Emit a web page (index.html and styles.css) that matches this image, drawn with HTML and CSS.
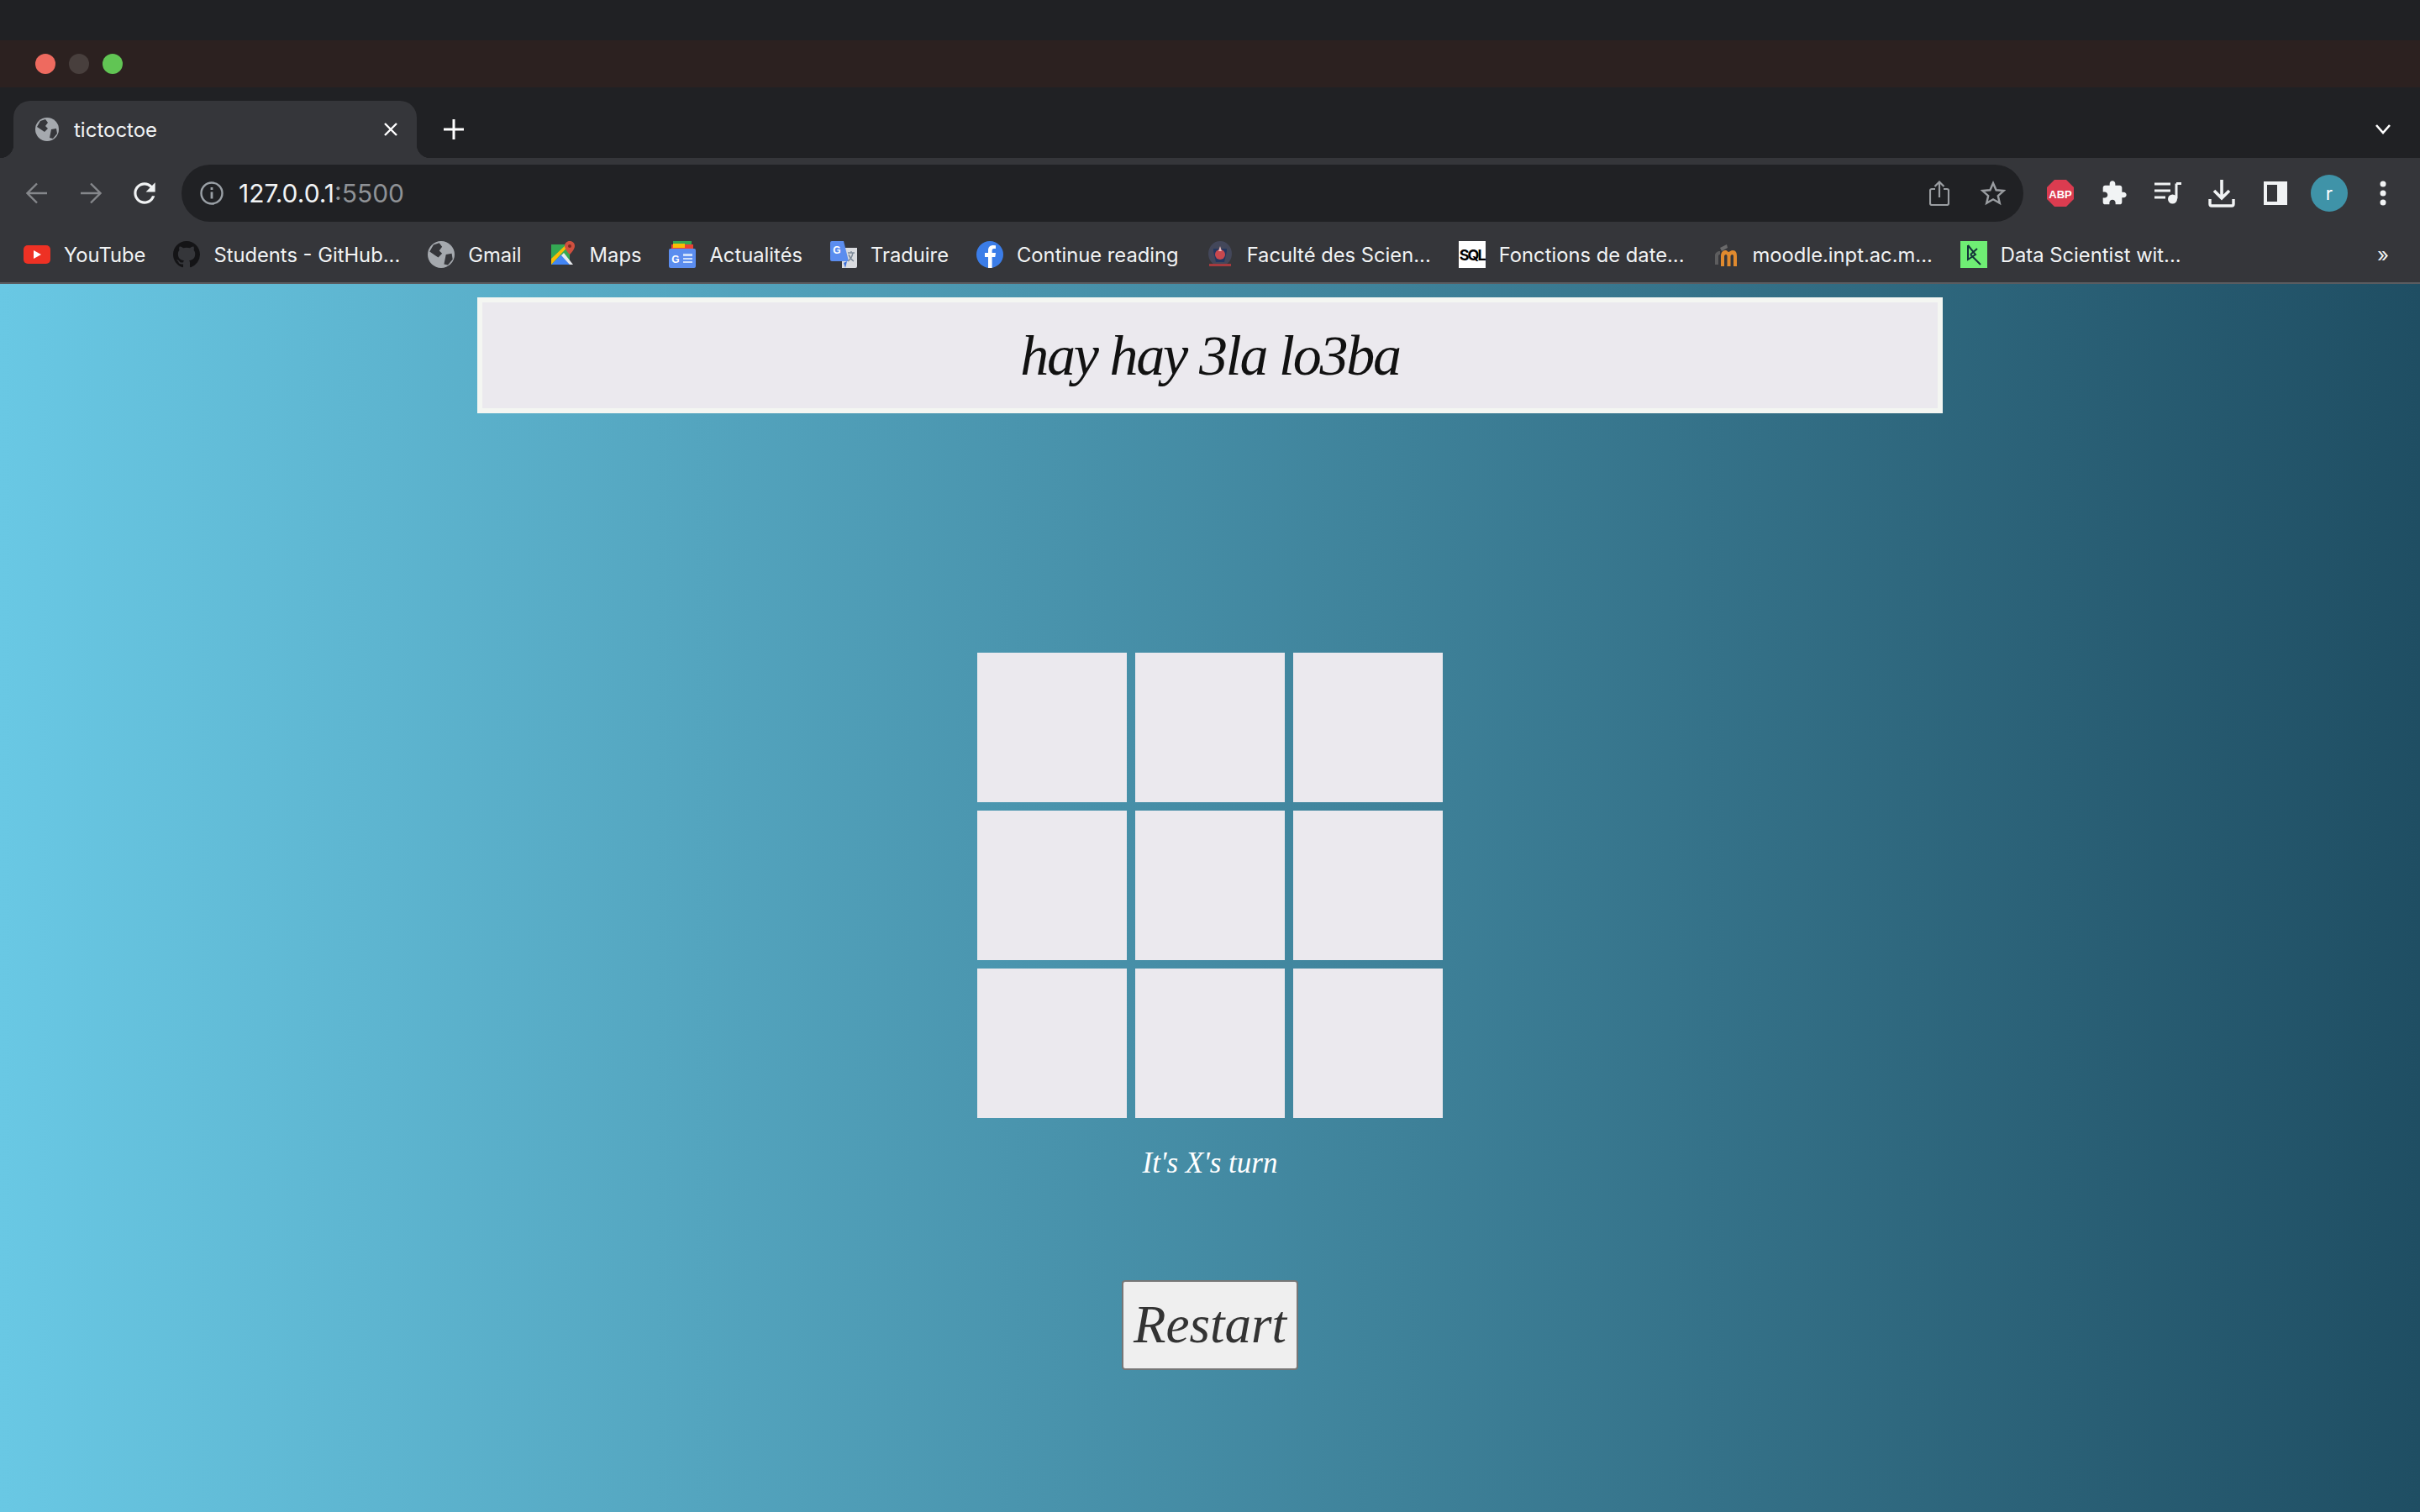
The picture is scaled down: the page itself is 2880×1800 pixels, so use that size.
FILE: index.html
```html
<!DOCTYPE html>
<html lang="fr">
<head>
    <meta charset="utf-8">
    <title>tictoctoe</title>
    <link rel="stylesheet" href="styles.css">
</head>
<body>
    <!-- browser chrome -->
    <div class="top-strip"></div>
    <div class="title-bar">
        <span class="light red"></span>
        <span class="light grey"></span>
        <span class="light green"></span>
    </div>
    <div class="tab-strip">
        <div class="tab">
            <svg class="tab-icon" viewBox="0 0 28 28"><circle cx="14" cy="14" r="14" fill="#a5a9ae"/><path d="M6 4l6-2 3 4-3 4 3 3-4 4-3-2-6-4zM19 14l6-1 1 6-5 6-4-1 1-5z" fill="#35363a"/></svg>
            <span class="tab-title">tictoctoe</span>
            <svg class="tab-close" viewBox="0 0 18 18"><path d="M2 2l14 14M16 2L2 16" stroke="#fff" stroke-width="2.4"/></svg>
        </div>
        <svg class="new-tab" viewBox="0 0 24 24"><path d="M12 0v24M0 12h24" stroke="#fff" stroke-width="3"/></svg>
        <svg class="tab-list" viewBox="0 0 20 14"><path d="M2 2l8 9 8-9" fill="none" stroke="#fff" stroke-width="2.6"/></svg>
    </div>
    <div class="toolbar">
        <span class="tool"><svg width="26" height="26" viewBox="0 0 26 26"><path d="M25 13H2M13 1.500L1.500 13 13 24.500" fill="none" stroke="#85878b" stroke-width="2.400"/></svg></span>
        <span class="tool"><svg width="26" height="26" viewBox="0 0 26 26"><path d="M1 13h23M13 1.500L24.500 13 13 24.500" fill="none" stroke="#85878b" stroke-width="2.400"/></svg></span>
        <span class="tool"><svg width="38" height="38" viewBox="0 0 24 24"><path d="M17.650 6.350C16.200 4.900 14.210 4 12 4c-4.420 0-7.990 3.580-7.990 8s3.570 8 7.990 8c3.730 0 6.840-2.550 7.730-6h-2.080c-.82 2.330-3.040 4-5.650 4-3.310 0-6-2.690-6-6s2.690-6 6-6c1.660 0 3.140.69 4.220 1.780L13 11h7V4l-2.350 2.350z" fill="#f1f3f4"/></svg></span>
        <div class="omnibox">
            <svg class="info" viewBox="0 0 28 28"><circle cx="14" cy="14" r="12.500" fill="none" stroke="#9aa0a6" stroke-width="2.400"/><path d="M14 12.500v8M14 7v3" stroke="#9aa0a6" stroke-width="2.800"/></svg>
            <span class="url">127.0.0.1<span class="port">:5500</span></span>
            <span class="tool"><svg width="24" height="30" viewBox="0 0 24 30"><path d="M7 10H3a2 2 0 0 0-2 2v15a2 2 0 0 0 2 2h18a2 2 0 0 0 2-2V12a2 2 0 0 0-2-2h-4M12 20V2M6.500 7L12 1.500 17.500 7" fill="none" stroke="#9b9ea2" stroke-width="2.200"/></svg></span>
            <span class="tool"><svg width="30" height="30" viewBox="0 0 30 30"><path d="M15 3l3.600 8.300 9 .8-6.800 6 2 8.800-7.800-4.600-7.800 4.600 2-8.800-6.800-6 9-.8z" fill="none" stroke="#9b9ea2" stroke-width="2.400"/></svg></span>
        </div>
        <span class="tool"><svg width="34" height="34" viewBox="0 0 34 34"><path d="M10 1h14l9 9v14l-9 9H10l-9-9V10z" fill="#db3c50"/><text x="17" y="22.500" class="abp">ABP</text></svg></span>
        <span class="tool"><svg width="32" height="32" viewBox="0 0 24 24"><path d="M20.500 11H19V7c0-1.100-.9-2-2-2h-4V3.500C13 2.120 11.880 1 10.500 1S8 2.120 8 3.500V5H4c-1.100 0-1.990.9-1.990 2v3.800H3.500c1.490 0 2.700 1.210 2.700 2.700s-1.210 2.700-2.700 2.700H2V20c0 1.100.9 2 2 2h3.800v-1.500c0-1.490 1.210-2.700 2.700-2.700 1.490 0 2.700 1.210 2.700 2.700V22H17c1.100 0 2-.9 2-2v-4h1.500c1.380 0 2.500-1.120 2.500-2.500S21.880 11 20.500 11z" fill="#f1f3f4"/></svg></span>
        <span class="tool"><svg width="32" height="26" viewBox="0 0 32 26"><path d="M0 2h19M0 10h19M0 18h13" stroke="#f1f3f4" stroke-width="3"/><path d="M26 1.500v18" stroke="#f1f3f4" stroke-width="3"/><path d="M26 1.500h6" stroke="#f1f3f4" stroke-width="3"/><circle cx="21.500" cy="20" r="5.500" fill="#f1f3f4"/></svg></span>
        <span class="tool"><svg width="32" height="34" viewBox="0 0 32 34"><path d="M16 1v21M7 14l9 9 9-9" fill="none" stroke="#f1f3f4" stroke-width="3.600"/><path d="M2 24v6a2 2 0 0 0 2 2h24a2 2 0 0 0 2-2v-6" fill="none" stroke="#f1f3f4" stroke-width="3.400"/></svg></span>
        <span class="tool"><svg width="28" height="28" viewBox="0 0 28 28"><path d="M0 0h28v28H0z" fill="#f1f3f4"/><path d="M4 4h12v20H4z" fill="#35363a"/></svg></span>
        <span class="tool"><span class="avatar">r</span></span>
        <span class="tool"><svg width="8" height="30" viewBox="0 0 8 30"><circle cx="4" cy="4" r="3.500" fill="#f1f3f4"/><circle cx="4" cy="15" r="3.500" fill="#f1f3f4"/><circle cx="4" cy="26" r="3.500" fill="#f1f3f4"/></svg></span>
    </div>
    <div class="bookmarks">
        <a class="bookmark">
            <svg class="fav" viewBox="0 0 32 32"><rect x="0" y="5" width="32" height="22" rx="5" fill="#ee3124"/><path d="M12 11l9 5-9 5z" fill="#fff"/></svg>
            YouTube
        </a>
        <a class="bookmark">
            <svg class="fav" viewBox="0 0 16 16"><path d="M8 0C3.580 0 0 3.580 0 8c0 3.540 2.290 6.530 5.470 7.590.4.07.55-.17.55-.38 0-.19-.01-.82-.01-1.490-2.010.37-2.530-.49-2.690-.94-.09-.23-.48-.94-.82-1.130-.28-.15-.68-.52-.01-.53.63-.01 1.080.58 1.230.82.72 1.210 1.870.87 2.330.66.07-.52.28-.87.51-1.070-1.780-.2-3.640-.89-3.640-3.950 0-.87.31-1.590.82-2.150-.08-.2-.36-1.020.08-2.120 0 0 .67-.21 2.200.82.64-.18 1.320-.27 2-.27.68 0 1.360.09 2 .27 1.530-1.040 2.200-.82 2.200-.82.44 1.100.16 1.920.08 2.120.51.56.82 1.270.82 2.150 0 3.070-1.870 3.750-3.650 3.950.29.25.54.73.54 1.480 0 1.070-.01 1.930-.01 2.200 0 .21.15.46.55.38A8.013 8.013 0 0 0 16 8c0-4.420-3.580-8-8-8z" fill="#141416"/></svg>
            Students - GitHub...
        </a>
        <a class="bookmark">
            <svg class="fav" viewBox="0 0 28 28"><circle cx="14" cy="14" r="14" fill="#a5a9ae"/><path d="M6 4l6-2 3 4-3 4 3 3-4 4-3-2-6-4zM19 14l6-1 1 6-5 6-4-1 1-5z" fill="#35363a"/></svg>
            Gmail
        </a>
        <a class="bookmark">
            <svg class="fav" viewBox="0 0 32 32"><path d="M2 4h22v24H2z" fill="#34a853"/><path d="M2 28l12-12 12 12z" fill="#4285f4"/><path d="M2 21L20 4h4L2 28z" fill="#fbbc04"/><path d="M17 14l11 14h-4L14 17z" fill="#e8eaed"/><path d="M24 0c-3.500 0-6 2.500-6 6 0 4 6 10 6 10s6-6 6-10c0-3.500-2.500-6-6-6z" fill="#d0503f"/><circle cx="24" cy="6" r="2" fill="#7a2a20"/></svg>
            Maps
        </a>
        <a class="bookmark">
            <svg class="fav" viewBox="0 0 32 32"><path d="M5 0h22v6H5z" fill="#34a853"/><path d="M3 4h26v6H3z" fill="#ea4335"/><path d="M5 3h14v5H5z" fill="#fbbc04"/><rect x="0" y="9" width="32" height="23" rx="2" fill="#5b8def"/><path d="M17 15h11v3H17zM17 20h11v2H17zM17 24h11v2H17z" fill="#cfe0fb"/><text x="8" y="26" class="news-g">G</text></svg>
            Actualités
        </a>
        <a class="bookmark">
            <svg class="fav" viewBox="0 0 32 32"><path d="M14 8h18v22a2 2 0 0 1-2 2H14z" fill="#dadce0"/><path d="M2 0h14l6 24H2a2 2 0 0 1-2-2V2a2 2 0 0 1 2-2z" fill="#5b8def"/><path d="M16 26l4-2-2 8z" fill="#3c6fd8"/><text x="8" y="15" class="news-g">G</text><path d="M21 14h8M25 12v2M27 14c-1 5-3 8-6 10M22 16c1 3 3 6 6 8" fill="none" stroke="#7d8a99" stroke-width="1.400"/></svg>
            Traduire
        </a>
        <a class="bookmark">
            <svg class="fav" viewBox="0 0 32 32"><circle cx="16" cy="16" r="16" fill="#3b7de8"/><path d="M14 32V19h-4v-5h4v-3c0-4 2.500-6 6-6l3 .2V9h-2c-1.800 0-2.400 1-2.400 2.400V14h4.400l-.7 5h-3.700v13z" fill="#fff"/></svg>
            Continue reading
        </a>
        <a class="bookmark">
            <svg class="fav" viewBox="0 0 32 32"><ellipse cx="16" cy="15" rx="14" ry="15" fill="#43475a"/><path d="M8 9h16v3l-3 13H11L8 12z" fill="#23365f"/><circle cx="16" cy="16" r="6" fill="#c8484e"/><path d="M16 6l2 6h-4z" fill="#e9b6b6"/><path d="M3 27h26v3H3z" fill="#a63a3e"/></svg>
            Faculté des Scien...
        </a>
        <a class="bookmark">
            <span class="sql-icon">SQL</span>
            Fonctions de date...
        </a>
        <a class="bookmark">
            <svg class="fav" viewBox="0 0 32 32"><path d="M3 17c0-3 3-5 6-5v4c-1 0-2 .5-2 2v10H3z" fill="#5d5d5e"/><path d="M9 8l8-4 1 4-7 4z" fill="#6a6a6b"/><path d="M10 18c0-4 2-7 5-7s3 2 4 2 3-2 5-2c4 0 5 3 5 7v12h-4V18c0-1-.5-2-1.500-2s-2 1-2 2v12h-4V18c0-1-.5-2-1.500-2s-2 1-2 2v12h-4z" fill="#e08a2e"/></svg>
            moodle.inpt.ac.m...
        </a>
        <a class="bookmark">
            <svg class="fav" viewBox="0 0 32 32"><path d="M0 0h32v32H0z" fill="#6fee74"/><path d="M9 5v17l9-6-9-11M12 16l12 12M20 9l-8 7" fill="none" stroke="#14323a" stroke-width="2"/></svg>
            Data Scientist wit...
        </a>
        <span class="more">»</span>
    </div>

    <!-- the game -->
    <main class="game">
        <h1 class="banner">hay hay 3la lo3ba</h1>
        <div class="board">
            <div class="cell"></div>
            <div class="cell"></div>
            <div class="cell"></div>
            <div class="cell"></div>
            <div class="cell"></div>
            <div class="cell"></div>
            <div class="cell"></div>
            <div class="cell"></div>
            <div class="cell"></div>
        </div>
        <p class="status">It's X's turn</p>
        <button class="restart">Restart</button>
    </main>
</body>
</html>
```

FILE: styles.css
```css
body {
    margin: 0;
    height: 100vh;
    display: flex;
    flex-direction: column;
    overflow: hidden;
    font-family: Inter, "Liberation Sans", sans-serif;
    background-color: #202124;
}

/* browser chrome */
.top-strip {
    height: 48px;
    background-color: #202124;
}

.title-bar {
    height: 56px;
    padding-left: 42px;
    display: flex;
    align-items: center;
    gap: 16px;
    background-color: #2c2120;
}

.light {
    width: 24px;
    height: 24px;
    border-radius: 50%;
}

.light.red { background-color: #ee6a5f; }
.light.grey { background-color: #483f3d; }
.light.green { background-color: #61c554; }

.tab-strip {
    height: 68px;
    padding-top: 16px;
    padding-left: 16px;
    padding-right: 34px;
    display: flex;
    align-items: stretch;
    background-color: #202124;
}

.tab {
    position: relative;
    width: 480px;
    box-sizing: border-box;
    padding: 0 22px 0 26px;
    display: flex;
    align-items: center;
    background-color: #35363a;
    border-radius: 20px 20px 0 0;
}

/* the little flares at the foot of the tab */
.tab::before,
.tab::after {
    content: "";
    position: absolute;
    bottom: 0;
    width: 16px;
    height: 16px;
}

.tab::before {
    left: -16px;
    background: radial-gradient(circle at 0 0, transparent 16px, #35363a 16.500px);
}

.tab::after {
    right: -16px;
    background: radial-gradient(circle at 100% 0, transparent 16px, #35363a 16.500px);
}

.tab-icon {
    width: 28px;
    height: 28px;
    margin-right: 18px;
}

.tab-title {
    flex: 1;
    color: #f1f3f4;
    font-size: 24px;
}

.tab-close {
    width: 18px;
    height: 18px;
}

.new-tab {
    width: 24px;
    height: 24px;
    margin-left: 32px;
    align-self: center;
}

.tab-list {
    width: 20px;
    height: 14px;
    margin-left: auto;
    align-self: center;
}

.toolbar {
    height: 84px;
    box-sizing: border-box;
    padding: 8px 12px;
    display: flex;
    align-items: flex-start;
    background-color: #35363a;
}

.tool {
    flex: none;
    width: 64px;
    height: 68px;
    display: flex;
    align-items: center;
    justify-content: center;
}

.omnibox {
    flex: 1;
    height: 68px;
    margin: 0 12px;
    padding: 0 4px 0 20px;
    display: flex;
    align-items: center;
    background-color: #202124;
    border-radius: 34px;
}

.info {
    width: 28px;
    height: 28px;
    margin-left: 2px;
    margin-right: 18px;
}

.url {
    flex: 1;
    color: #f1f3f4;
    font-size: 30px;
}

.port {
    color: #8f9296;
}

.abp {
    font-family: "Liberation Sans", sans-serif;
    font-size: 13px;
    font-weight: 700;
    fill: #fff;
    text-anchor: middle;
}

.avatar {
    width: 44px;
    height: 44px;
    display: flex;
    align-items: center;
    justify-content: center;
    color: #fff;
    font-size: 22px;
    background-color: #3f93a8;
    border-radius: 50%;
}

.bookmarks {
    height: 62px;
    padding: 0 37px 2px 28px;
    display: flex;
    align-items: center;
    gap: 33px;
    background-color: #35363a;
    border-bottom: 2px solid #5a5c60;
}

.bookmark {
    display: flex;
    align-items: center;
    gap: 16px;
    color: #f1f3f4;
    font-size: 23.750px;
    white-space: nowrap;
}

.fav {
    width: 32px;
    height: 32px;
}

.news-g {
    font-family: "Liberation Sans", sans-serif;
    font-size: 12px;
    font-weight: 700;
    fill: #fff;
    text-anchor: middle;
}

.sql-icon {
    width: 32px;
    height: 32px;
    display: flex;
    align-items: center;
    justify-content: center;
    color: #000;
    font-size: 18px;
    font-weight: 700;
    letter-spacing: -2px;
    background-color: #fff;
}

.more {
    margin-left: auto;
    color: #f1f3f4;
    font-size: 24px;
}

/* the game */
.game {
    flex: 1;
    display: flex;
    flex-direction: column;
    align-items: center;
    font-family: "Liberation Serif", serif;
    font-style: italic;
    background: linear-gradient(90deg, #69c8e4, #1f4e63);
}

.banner {
    width: 1744px;
    height: 138px;
    box-sizing: border-box;
    margin: 16px 0 0;
    display: flex;
    align-items: center;
    justify-content: center;
    color: #111;
    font-size: 68px;
    font-weight: 400;
    letter-spacing: -2.200px;
    background-color: #ebe9ee;
    border: 6px solid #f4f6f2;
}

.board {
    margin-top: 285px;
    display: grid;
    grid-template-columns: repeat(3, 178px);
    grid-auto-rows: 178px;
    gap: 10px;
}

.cell {
    background-color: #ebe9ee;
}

.status {
    margin: 34px 0 0;
    color: #fff;
    font-size: 35px;
    line-height: 40px;
}

.restart {
    width: 210px;
    height: 107px;
    margin-top: 119px;
    padding: 0;
    color: #333;
    font-family: "Liberation Serif", serif;
    font-style: italic;
    font-size: 63px;
    background-color: #efefef;
    border: 2px solid #767676;
    border-radius: 4px;
}
```
